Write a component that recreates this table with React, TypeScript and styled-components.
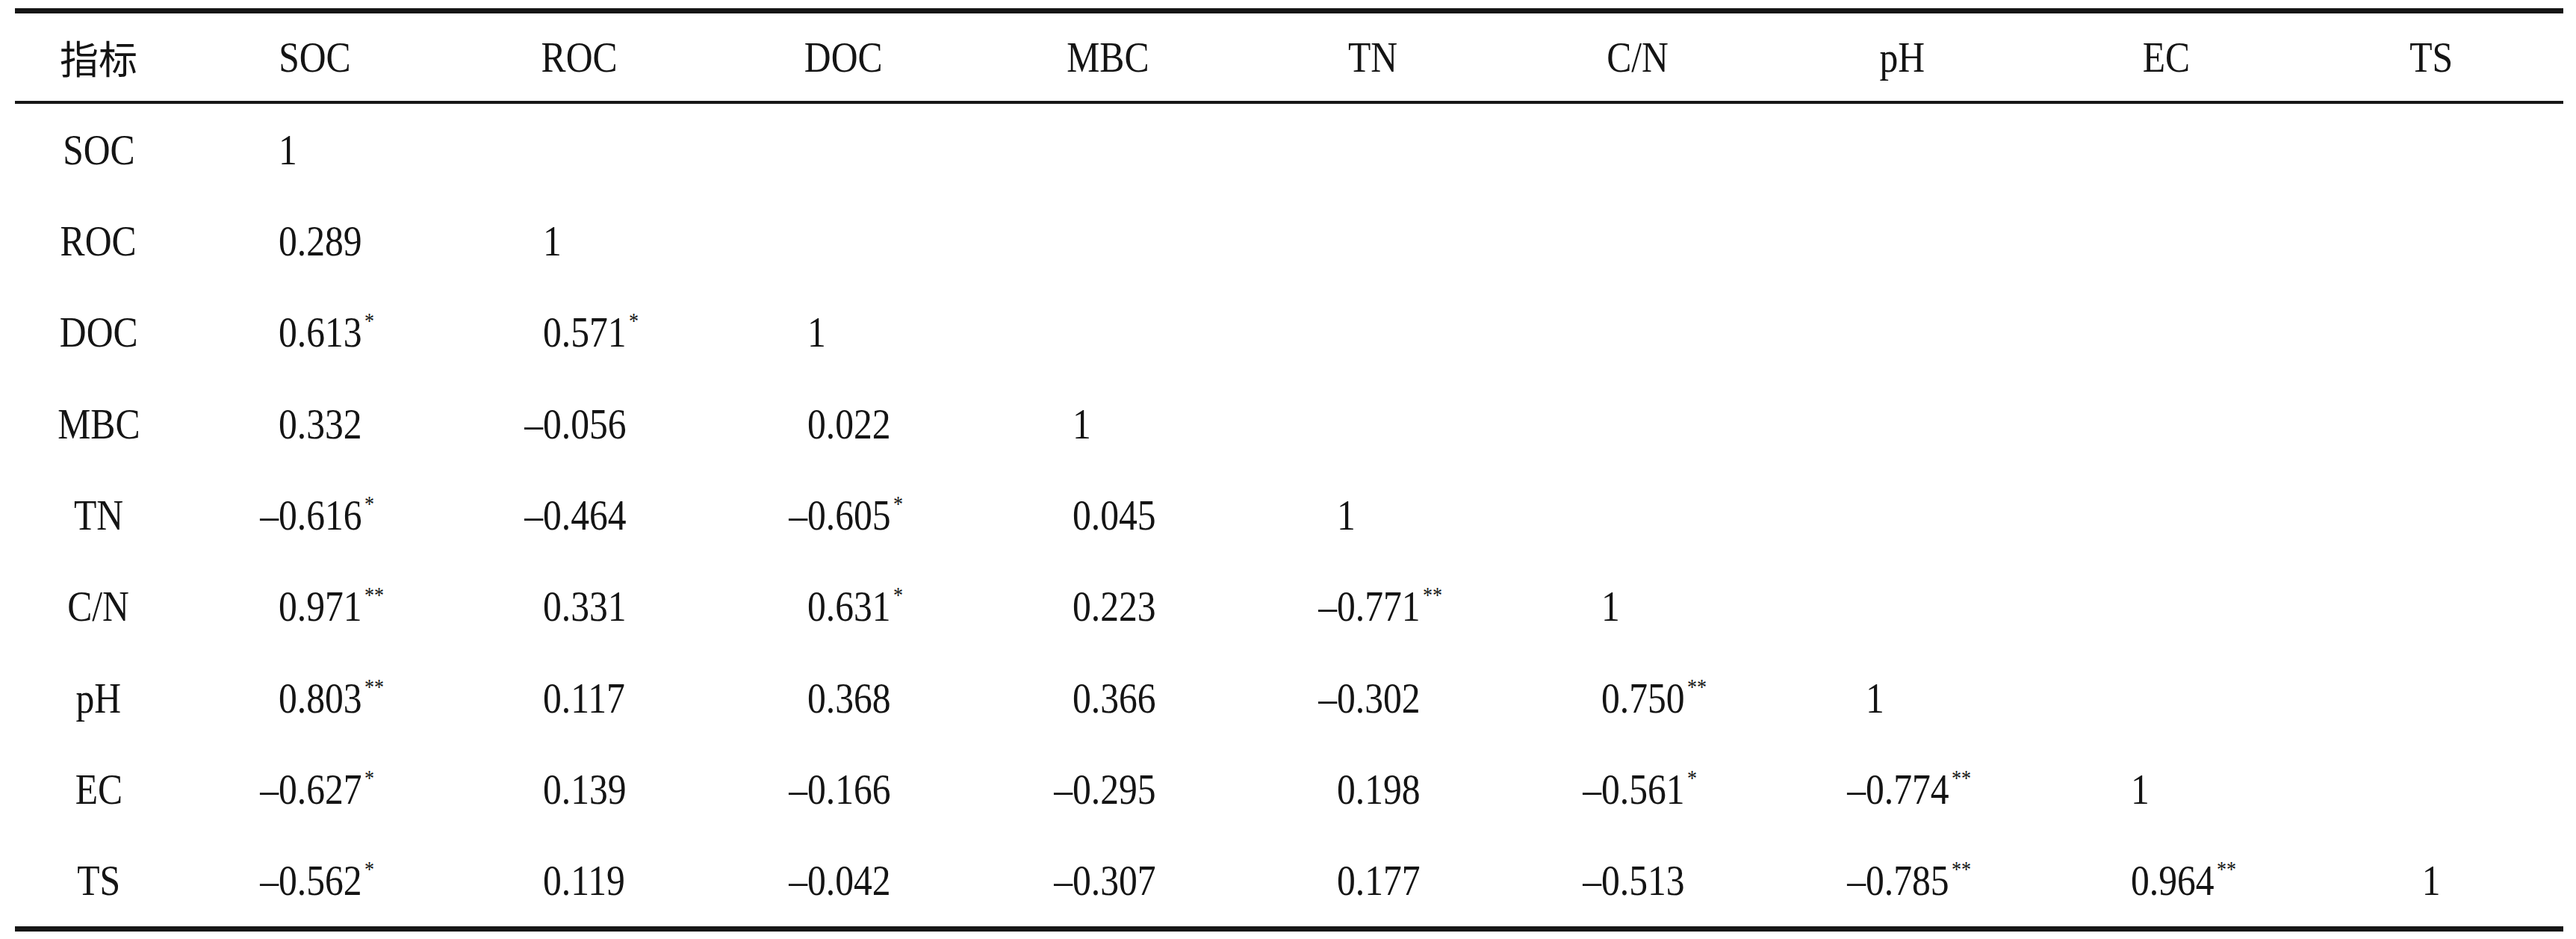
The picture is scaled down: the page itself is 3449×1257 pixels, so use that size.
import React from "react";
import styled, { createGlobalStyle, css } from "styled-components";

const GlobalStyle = createGlobalStyle`
  html, body {
    margin: 0;
    padding: 0;
    background: #ffffff;
  }
  body {
    font-family: "Liberation Serif", "Times New Roman", serif;
    color: #141414;
  }
`;

const Page = styled.main`
  padding: 11px 17px 0 20px;
`;

const Table = styled.div`
  display: grid;
  grid-template-columns: 224px repeat(9, 1fr);
  grid-template-rows: 121px repeat(9, 122.33px);
  width: 3412px;
  border-top: 7px solid #161616;
  border-bottom: 7px solid #161616;
  font-size: 57px;
  line-height: 1;
`;

const HeadCell = styled.div<{ $cjk?: boolean }>`
  box-sizing: border-box;
  display: flex;
  align-items: center;
  justify-content: center;
  border-bottom: 4px solid #161616;
  ${(p) =>
    p.$cjk &&
    css`
      font-family: "Noto Sans CJK SC", "Noto Sans CJK TC", sans-serif;
      font-size: 52px;
    `}
`;

const LabelCell = styled.div`
  display: flex;
  align-items: center;
  justify-content: center;
`;

const ValueCell = styled.div<{ $centered?: boolean }>`
  display: flex;
  align-items: center;
  justify-content: ${(p) => (p.$centered ? "center" : "flex-start")};
  padding-left: ${(p) => (p.$centered ? "0" : "129px")};
`;

/* the printed face is a narrow Times: condense the Latin glyphs */
const Narrow = styled.span<{ $origin?: "left" | "center" }>`
  display: inline-block;
  white-space: nowrap;
  transform: scaleX(0.87);
  transform-origin: ${(p) => (p.$origin === "left" ? "left center" : "center center")};
`;

const Minus = styled.span`
  margin-left: -0.5em;
`;

const Star = styled.span`
  font-size: 30px;
  line-height: 0;
  vertical-align: 25px;
  margin-left: 4px;
`;

const headers = ["SOC", "ROC", "DOC", "MBC", "TN", "C/N", "pH", "EC", "TS"];

const rows: string[][] = [
  ["1"],
  ["0.289", "1"],
  ["0.613*", "0.571*", "1"],
  ["0.332", "-0.056", "0.022", "1"],
  ["-0.616*", "-0.464", "-0.605*", "0.045", "1"],
  ["0.971**", "0.331", "0.631*", "0.223", "-0.771**", "1"],
  ["0.803**", "0.117", "0.368", "0.366", "-0.302", "0.750**", "1"],
  ["-0.627*", "0.139", "-0.166", "-0.295", "0.198", "-0.561*", "-0.774**", "1"],
  ["-0.562*", "0.119", "-0.042", "-0.307", "0.177", "-0.513", "-0.785**", "0.964**", "1"],
];

function Value({ raw, centered }: { raw: string; centered?: boolean }) {
  const negative = raw.startsWith("-");
  const stars = raw.replace(/[^*]/g, "");
  const digits = raw.replace(/[-*]/g, "");
  return (
    <Narrow $origin={centered ? "center" : "left"}>
      {negative && <Minus>–</Minus>}
      {digits}
      {stars && <Star>{stars}</Star>}
    </Narrow>
  );
}

export default function App() {
  return (
    <>
      <GlobalStyle />
      <Page>
        <Table>
          <HeadCell $cjk>指标</HeadCell>
          {headers.map((h) => (
            <HeadCell key={h}>
              <Narrow>{h}</Narrow>
            </HeadCell>
          ))}
          {rows.map((row, ri) => (
            <React.Fragment key={headers[ri]}>
              <LabelCell>
                <Narrow>{headers[ri]}</Narrow>
              </LabelCell>
              {headers.map((_, ci) => (
                <ValueCell key={ci} $centered={ci === 8}>
                  {row[ci] !== undefined ? <Value raw={row[ci]} centered={ci === 8} /> : null}
                </ValueCell>
              ))}
            </React.Fragment>
          ))}
        </Table>
      </Page>
    </>
  );
}
